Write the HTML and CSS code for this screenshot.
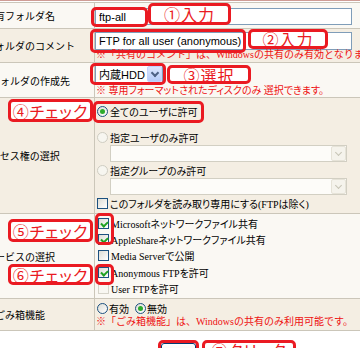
FILE: index.html
```html
<!DOCTYPE html>
<html lang="ja">
<head>
  <meta charset="UTF-8">
  <meta name="viewport" content="width=device-width, initial-scale=1.0">
  <title>共有フォルダ設定</title>
  <link rel="stylesheet" href="styles.css">
</head>
<body>
  <div class="page">
    <div class="top-rule"></div>
    <div class="form">

      <div class="row light r-name">
        <div class="label">共有フォルダ名</div>
        <div class="field">
          <input class="text-input wide" type="text" value="ftp-all">
        </div>
      </div>

      <div class="row dark r-comment">
        <div class="label">共有フォルダのコメント</div>
        <div class="field">
          <input class="text-input wide tall" type="text" value="FTP for all user (anonymous)">
          <div class="note note-tight">※「共有のコメント」は、Windowsの共有のみ有効となります。</div>
        </div>
      </div>

      <div class="row light r-disk">
        <div class="label">共有フォルダの作成先</div>
        <div class="field">
          <div class="select disk">
            <span class="select-value">内蔵HDD</span>
            <span class="select-arrow"></span>
          </div>
          <div class="note palt">※ 専用フォーマットされたディスクのみ 選択できます。</div>
        </div>
      </div>

      <div class="row dark r-access">
        <div class="label">アクセス権の選択</div>
        <div class="field">
          <div class="opt first"><span class="radio on"></span>全てのユーザに許可</div>
          <div class="opt"><span class="radio off"></span>指定ユーザのみ許可</div>
          <div class="select off sub"><span class="select-value"></span><span class="select-arrow"></span></div>
          <div class="opt"><span class="radio off"></span>指定グループのみ許可</div>
          <div class="select off sub"><span class="select-value"></span><span class="select-arrow"></span></div>
          <div class="opt"><span class="check"></span>このフォルダを読み取り専用にする(FTPは除く)</div>
        </div>
      </div>

      <div class="row light r-service">
        <div class="label">サービスの選択</div>
        <div class="field list">
          <div class="opt"><span class="check on"></span>Microsoftネットワークファイル共有</div>
          <div class="opt"><span class="check on"></span>AppleShareネットワークファイル共有</div>
          <div class="opt"><span class="check"></span>Media Serverで公開</div>
          <div class="opt"><span class="check on"></span>Anonymous FTPを許可</div>
          <div class="opt"><span class="check off"></span>User FTPを許可</div>
        </div>
      </div>

      <div class="row dark r-trash">
        <div class="label">ごみ箱機能</div>
        <div class="field">
          <div class="opt inline">
            <span class="choice"><span class="radio"></span>有効</span>
            <span class="choice"><span class="radio on"></span>無効</span>
          </div>
          <div class="note">※「ごみ箱機能」は、Windowsの共有のみ利用可能です。</div>
        </div>
      </div>

    </div>

    <div class="actions">
      <button class="submit" type="button">設定</button>
    </div>

    <!-- 赤枠と吹き出し -->
    <div class="mark m-name"></div>
    <div class="callout c-name">①入力</div>
    <div class="mark m-comment"></div>
    <div class="callout c-comment">②入力</div>
    <div class="mark m-disk"></div>
    <div class="callout c-disk">③選択</div>
    <div class="callout c-access">④チェック</div>
    <div class="mark m-access"></div>
    <div class="callout c-share">⑤チェック</div>
    <div class="mark m-share"></div>
    <div class="callout c-ftp">⑥チェック</div>
    <div class="mark m-ftp"></div>
    <div class="mark m-submit"></div>
    <div class="callout c-submit">⑦クリック</div>
  </div>
</body>
</html>
```

FILE: styles.css
```css
* {
  box-sizing: border-box;
}

body {
  margin: 0;
  background: #ffffff;
  color: #000000;
  font-family: "Liberation Serif", "Noto Sans CJK JP", serif;
  font-size: 10px;
  overflow: hidden;
}

.page {
  position: relative;
  width: 360px;
  height: 348px;
  overflow: hidden;
}

.top-rule {
  height: 2px;
  border-top: 1px solid #cf9c95;
}

/* 左端の見出し列は画面外まで続いている */
.form {
  width: 420px;
  margin-left: -54px;
  border-top: 1px solid #cbc6b9;
}

.row {
  display: grid;
  grid-template-columns: 149px 1fr;
  border-bottom: 1px solid #cbc6b9;
}

.row.light {
  background: #faf8f3;
}

.row.dark {
  background: #f4eee3;
}

.r-name { height: 26px; }
.r-comment { height: 34px; }
.r-disk { height: 35px; }
.r-access { height: 116px; }
.r-service { height: 85px; }
.r-trash { height: 32px; }

.label {
  display: flex;
  align-items: center;
  justify-content: center;
  border-right: 1px solid #cbc6b9;
  white-space: nowrap;
  font-family: "Noto Sans CJK JP", sans-serif;
  font-size: 10px;
}

.field {
  white-space: nowrap;
}

.r-name .field { padding-top: 5px; }
.r-comment .field { padding-top: 3px; }
.r-disk .field { padding-top: 2px; }
.r-access .field { padding-top: 5px; }
.r-service .field { padding-top: 1px; }
.r-trash .field { padding-top: 1px; }

.text-input {
  display: block;
  height: 17px;
  margin: 0;
  padding: 0 3px;
  border: 1px solid #7f9db9;
  background: #ffffff;
  font-family: "Liberation Sans", sans-serif;
  font-size: 11px;
  color: #000000;
}

.text-input.wide {
  width: 257px;
}

.text-input.tall {
  height: 18px;
}

.note {
  color: #ee1111;
  font-size: 10px;
  line-height: 12px;
  padding-left: 1px;
}

.note-tight {
  line-height: 10px;
}

.r-disk .note {
  margin-top: 2px;
}

.palt {
  font-feature-settings: "palt";
}

/* セレクトボックス */
.select {
  display: flex;
  align-items: center;
  height: 18px;
  border: 1px solid #7f9db9;
  background: #ffffff;
}

.select.disk {
  width: 68px;
}

.select.sub {
  width: 237px;
  height: 17px;
  margin-left: 15px;
}

.select-value {
  flex: 1;
  padding-left: 3px;
  font-family: "Liberation Sans", "Noto Sans CJK JP", sans-serif;
  font-size: 11px;
}

.select-arrow {
  position: relative;
  width: 15px;
  height: 100%;
  border: 1px solid #c3d3fd;
  border-radius: 2px;
  background: linear-gradient(#dce7fe, #b6cbf8);
}

.select-arrow::before {
  content: "";
  position: absolute;
  left: 4px;
  top: 3px;
  width: 4px;
  height: 4px;
  border: solid #4d6185;
  border-width: 0 2px 2px 0;
  transform: rotate(45deg);
}

.select.off {
  border-color: #d2cfc3;
  background: #fdfcf9;
}

.select.off .select-arrow {
  border-color: #e6e3d8;
  background: #f5f3ec;
}

.select.off .select-arrow::before {
  border-color: #c7c4b6;
  border-width: 0 1px 1px 0;
}

/* ラジオ・チェック */
.opt {
  display: flex;
  align-items: center;
  gap: 2px;
  height: 16px;
  padding-left: 2px;
  font-feature-settings: "palt";
}

.opt.first {
  margin-bottom: 10px;
}

.list .opt {
  height: 16.3px;
  padding-left: 3px;
}

.opt.inline {
  gap: 6px;
}

.choice {
  display: flex;
  align-items: center;
  gap: 1px;
}

.radio {
  position: relative;
  width: 11px;
  height: 11px;
  border: 1px solid #1c5180;
  border-radius: 50%;
  background: linear-gradient(135deg, #dcdcd5, #ffffff);
}

.radio.on::after {
  content: "";
  position: absolute;
  left: 2px;
  top: 2px;
  width: 5px;
  height: 5px;
  border-radius: 50%;
  background: #2cab2c;
}

.radio.off {
  border-color: #cfcdc2;
  background: #f7f6f0;
}

.check {
  position: relative;
  width: 11px;
  height: 11px;
  border: 1px solid #1c5180;
  background: linear-gradient(135deg, #dcdcd5, #ffffff);
}

.check.on::after {
  content: "";
  position: absolute;
  left: 3px;
  top: 1px;
  width: 3px;
  height: 5px;
  border: solid #21a121;
  border-width: 0 2px 2px 0;
  transform: rotate(45deg);
}

.check.off {
  border-color: #d6d4ca;
  background: #f8f7f2;
}

/* ボタン */
.actions {
  display: flex;
  padding: 12px 0 0 161px;
}

.submit {
  width: 35px;
  height: 22px;
  border: 1px solid #003c74;
  border-radius: 3px;
  background: linear-gradient(#ffffff, #ece9d8);
  font-family: "Noto Sans CJK JP", sans-serif;
  font-size: 10px;
}

/* 赤枠と吹き出し */
.mark,
.callout {
  position: absolute;
  border: 3px solid #ea1a22;
  border-radius: 5px;
}

.callout {
  display: flex;
  align-items: center;
  justify-content: center;
  background: #ffffff;
  color: #ea1a22;
  font-family: "Noto Sans CJK JP", sans-serif;
  font-size: 16px;
  letter-spacing: 1px;
  font-feature-settings: "palt";
  white-space: nowrap;
}

.m-name { left: 91px; top: 7px; width: 57px; height: 20px; }
.c-name { left: 148px; top: 3px; width: 83px; height: 22px; }
.m-comment { left: 90px; top: 29px; width: 156px; height: 24px; }
.c-comment { left: 248px; top: 29px; width: 80px; height: 20px; }
.m-disk { left: 90px; top: 63px; width: 76px; height: 22px; }
.c-disk { left: 167px; top: 65px; width: 84px; height: 19px; }
.c-access { left: 8px; top: 99px; width: 85px; height: 23px; }
.m-access { left: 93px; top: 101px; width: 111px; height: 22px; }
.c-share { left: 8px; top: 219px; width: 85px; height: 23px; }
.m-share { left: 95px; top: 213px; width: 19px; height: 32px; }
.c-ftp { left: 8px; top: 264px; width: 85px; height: 21px; }
.m-ftp { left: 95px; top: 264px; width: 19px; height: 21px; }
.m-submit { left: 158px; top: 340px; width: 41px; height: 20px; }
.c-submit { left: 202px; top: 340px; width: 94px; height: 20px; }
```
